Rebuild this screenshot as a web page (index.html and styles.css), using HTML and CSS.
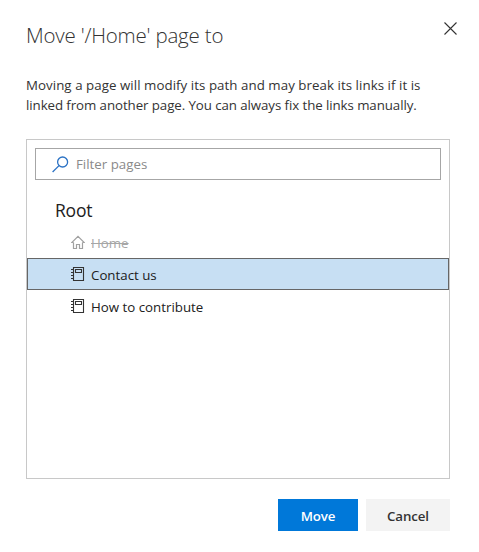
FILE: index.html
```html
<!DOCTYPE html>
<html lang="en">
<head>
<meta charset="utf-8">
<title>Move page</title>
<link rel="stylesheet" href="styles.css">
</head>
<body>
<main class="dialog">
  <header class="header">
    <h1 class="title">Move '/Home' page to</h1>
    <svg class="close" width="13" height="13" viewBox="0 0 13 13"><path d="M.5.5l12 12M12.5.5l-12 12"/></svg>
  </header>
  <p class="message"><span class="line line-first">Moving a page will modify its path and may break its links if it is</span> <span class="line line-second">linked from another page. You can always fix the links manually.</span></p>
  <section class="picker">
    <div class="search">
      <svg class="search-icon" width="17" height="17" viewBox="0 0 17 17"><circle cx="10.6" cy="6" r="5"/><path d="M7 9.6L.6 16"/></svg>
      <span class="placeholder">Filter pages</span>
    </div>
    <h2 class="root">Root</h2>
    <ul class="pages">
      <li class="page disabled">
        <svg class="icon" width="14" height="14" viewBox="0 0 14 14"><path d="M2.500 7.500H.8L7 1.300l6.200 6.200h-1.700M2.500 7.500v6h3v-4h3v4h3v-6"/></svg>
        <span class="name">Home</span>
      </li>
      <li class="page selected">
        <svg class="icon" width="14" height="14" viewBox="0 0 14 14"><path d="M2.500.5h10v13h-10zM4.500 2.500h6v3h-6zM0 2.500h3M0 5.500h3M0 8.500h3M0 11.500h3"/></svg>
        <span class="name">Contact us</span>
      </li>
      <li class="page">
        <svg class="icon" width="14" height="14" viewBox="0 0 14 14"><path d="M2.500.5h10v13h-10zM4.500 2.500h6v3h-6zM0 2.500h3M0 5.500h3M0 8.500h3M0 11.500h3"/></svg>
        <span class="name">How to contribute</span>
      </li>
    </ul>
  </section>
  <footer class="actions">
    <button class="button primary">Move</button>
    <button class="button secondary">Cancel</button>
  </footer>
</main>
</body>
</html>
```

FILE: styles.css
```css
* { box-sizing: border-box; }
body {
  margin: 0;
  background: #fff;
  color: #333;
  font-family: "Open Sans", "Noto Sans", sans-serif;
  font-size: 13.3px;
}
.dialog { width: 479px; height: 552px; padding: 20px 29px 0 26px; }
.header { display: flex; justify-content: space-between; height: 55px; }
.title {
  margin: 0;
  font-size: 20.5px;
  font-weight: 300;
  line-height: 30px;
  letter-spacing: -.2px;
  white-space: nowrap;
}
.close { margin: 2px -7px 0 0; fill: none; stroke: #333; stroke-width: 1.1; }
.message { margin: 0; line-height: 20px; height: 64px; }
.line { display: block; white-space: nowrap; }
.line-first { letter-spacing: .05px; }
.line-second { letter-spacing: -.08px; }
.picker { width: 424px; height: 340px; border: 1px solid #c8c8c8; padding-top: 8px; }
.search {
  display: flex;
  align-items: center;
  height: 32px;
  margin: 0 8px;
  padding-left: 16px;
  border: 1px solid #a6a6a6;
}
.search-icon { fill: none; stroke: #2b72c4; stroke-width: 1.3; }
.placeholder { margin-left: 7px; color: #8a8a8a; }
.root {
  margin: 15px 0 0 28px;
  height: 31px;
  line-height: 30px;
  font-size: 17.5px;
  font-weight: 400;
  letter-spacing: -.2px;
  color: #212121;
}
.pages { margin: 0; padding: 0; list-style: none; }
.page {
  display: flex;
  align-items: center;
  height: 32px;
  padding-left: 43px;
  border: 1px solid transparent;
  color: #212121;
}
.icon { fill: none; stroke: #333; stroke-width: 1.1; }
.name { margin-left: 6px; padding-top: 1px; white-space: nowrap; }
.disabled { color: #a6a6a6; }
.disabled .name { text-decoration: line-through; }
.disabled .icon { stroke: #a0a0a0; stroke-width: 1.2; }
.selected { background: #c7dff3; border-color: #666; }
.actions { display: flex; justify-content: flex-end; gap: 8px; width: 424px; margin-top: 20px; }
.button {
  height: 32px;
  padding: 2px 0 0;
  border: 0;
  font: 600 13.3px "Open Sans", "Noto Sans", sans-serif;
  letter-spacing: -.1px;
}
.primary { width: 80px; background: #0078d9; color: #fff; }
.secondary { width: 84px; background: #f3f3f3; color: #333; }
```
